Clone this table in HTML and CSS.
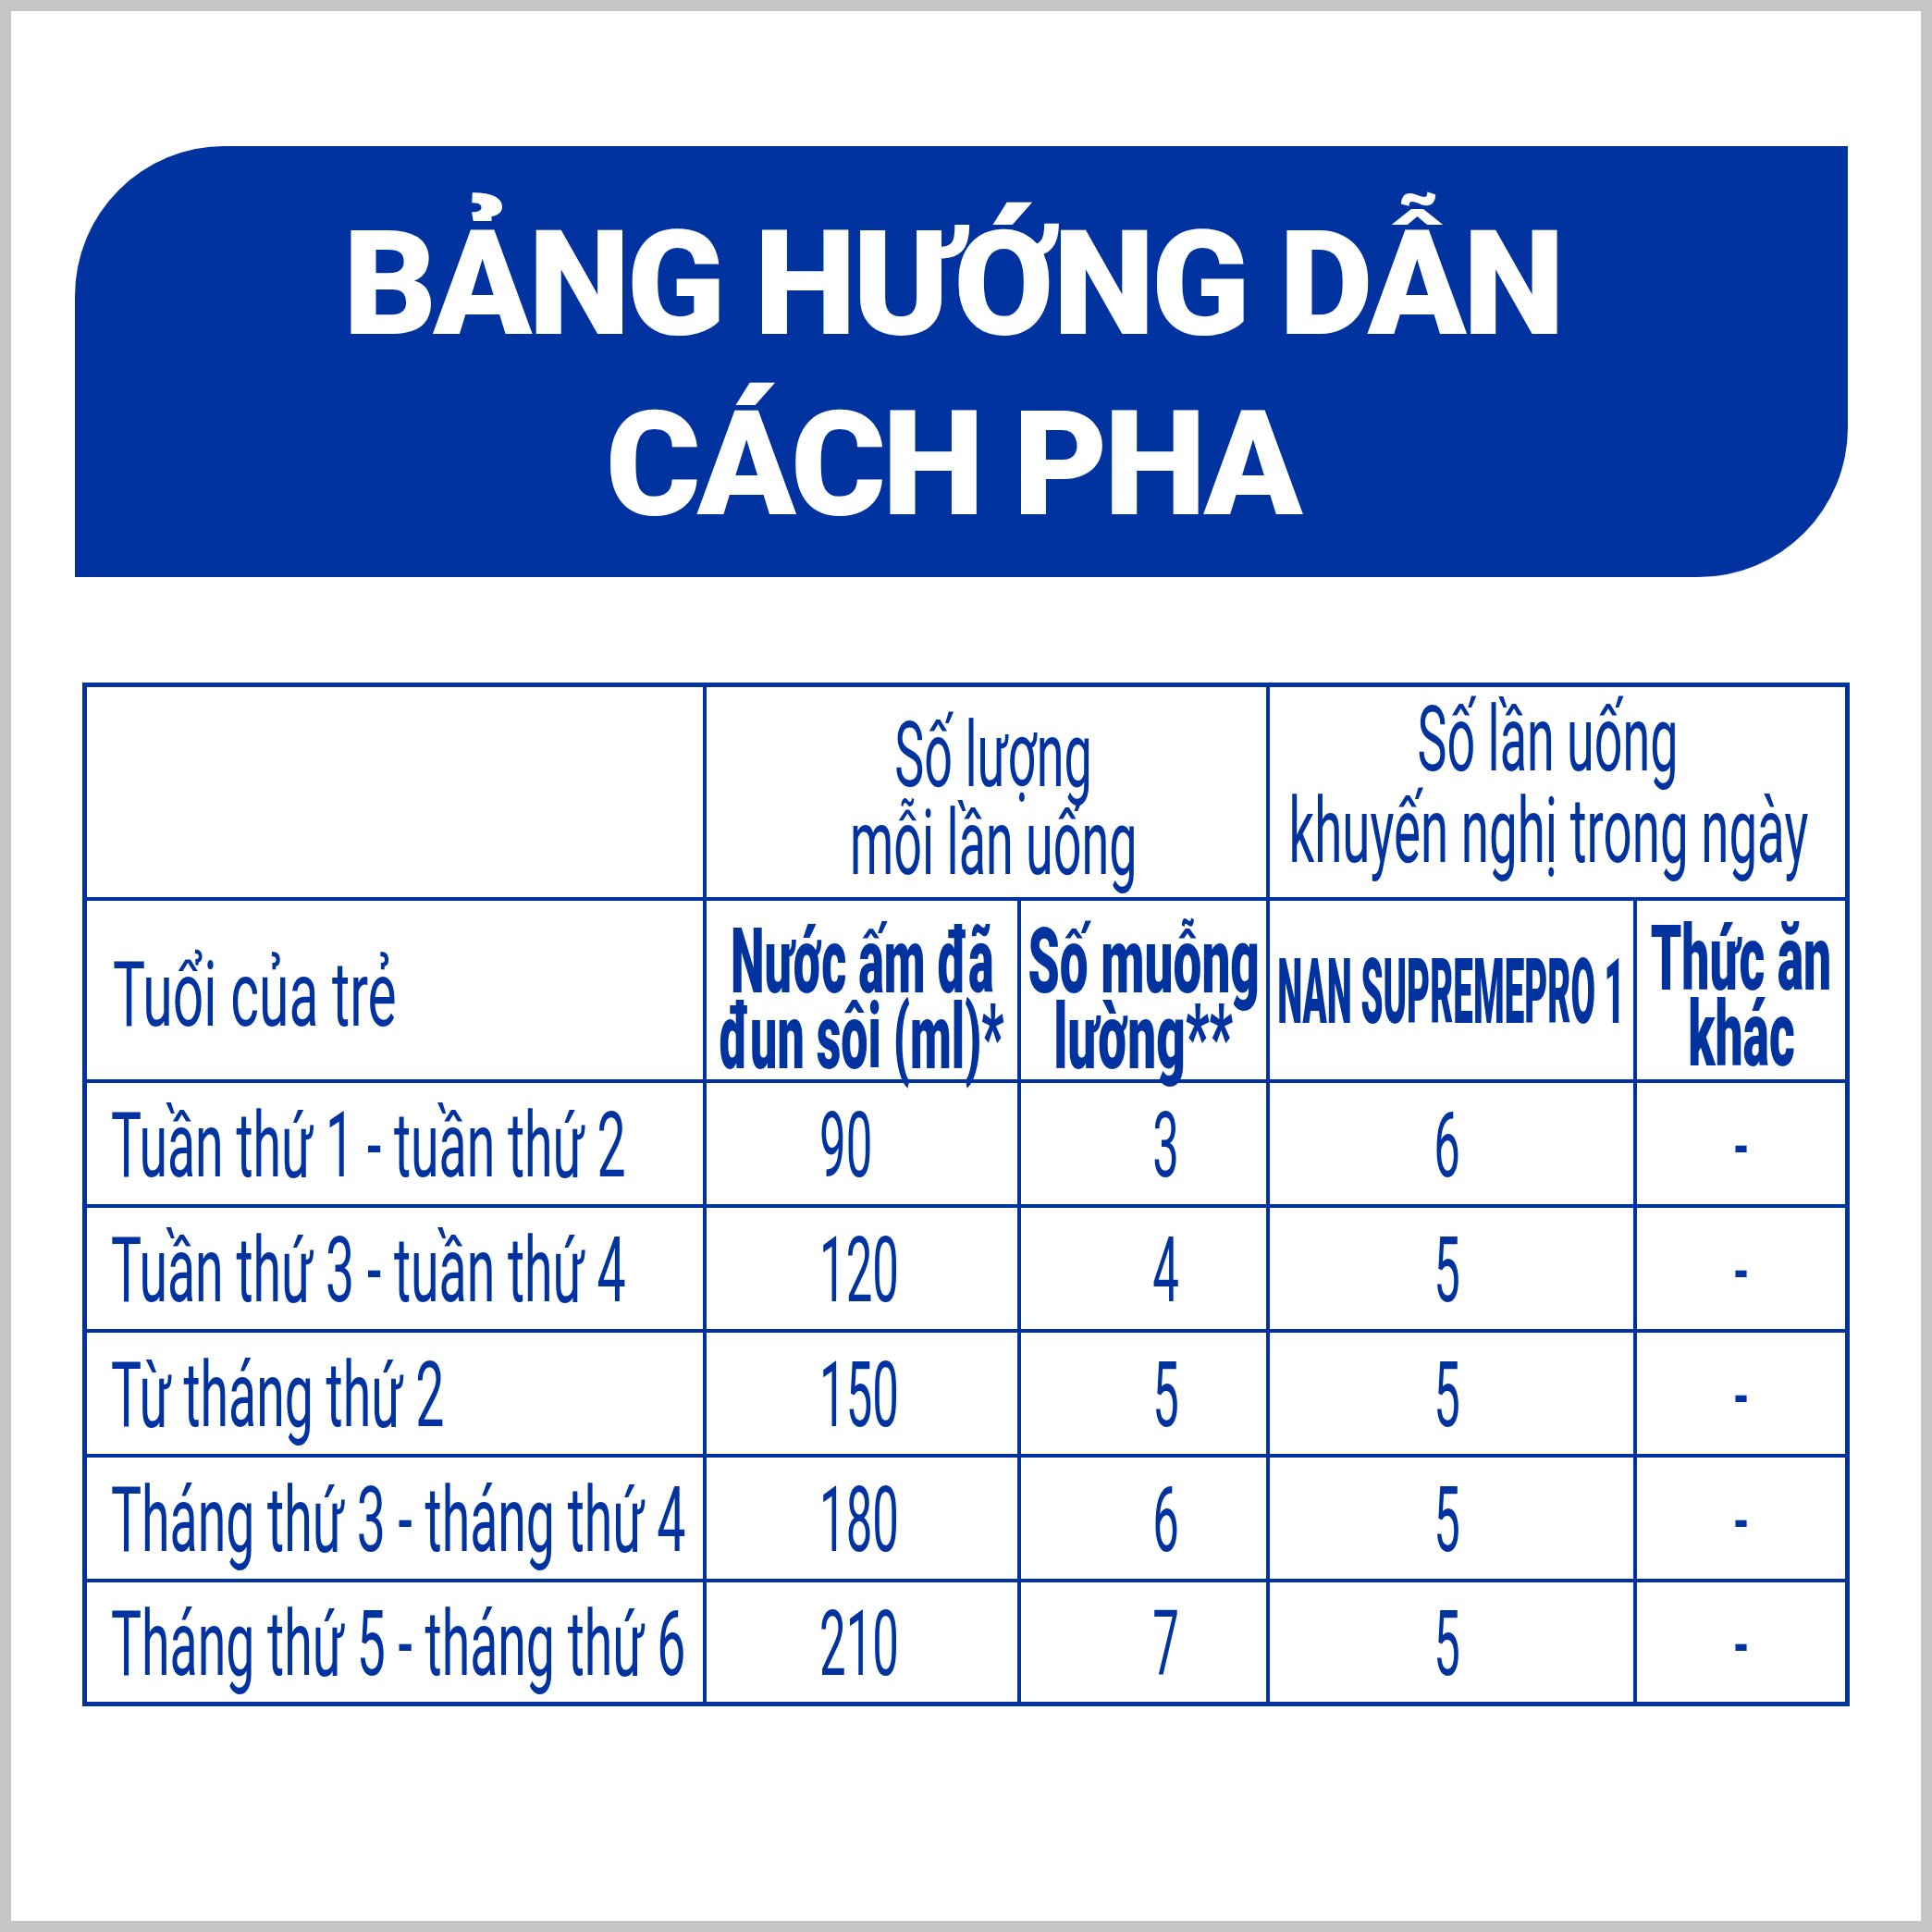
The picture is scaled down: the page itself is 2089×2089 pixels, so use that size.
FILE: index.html
```html
<!DOCTYPE html>
<html lang="vi">
<head>
<meta charset="utf-8">
<title>Bảng hướng dẫn cách pha</title>
<link rel="stylesheet" href="styles.css">
</head>
<body>
<div class="frame">
  <header class="banner">
    <h1 class="title"><span class="title-line">BẢNG HƯỚNG DẪN</span><span class="title-line">CÁCH PHA</span></h1>
  </header>

  <div class="table">
    <div class="cell"></div>
    <div class="cell span2 qty">
      <span class="t light hd">Số lượng</span>
      <span class="t light hd">mỗi lần uống</span>
    </div>
    <div class="cell span2 times">
      <span class="t light hd">Số lần uống</span>
      <span class="t light hd wide">khuyến nghị trong ngày</span>
    </div>

    <div class="cell age"><span class="t light age-text">Tuổi của trẻ</span></div>
    <div class="cell two water">
      <span class="t bold">Nước ấm đã</span>
      <span class="t bold">đun sôi (ml)*</span>
    </div>
    <div class="cell two spoon">
      <span class="t bold">Số muỗng</span>
      <span class="t bold">lường**</span>
    </div>
    <div class="cell nan"><span class="t bold nan-text">NAN SUPREMEPRO 1</span></div>
    <div class="cell two other">
      <span class="t bold">Thức ăn</span>
      <span class="t bold">khác</span>
    </div>

    <div class="cell row age-cell"><span class="t light label">Tuần thứ 1 - tuần thứ 2</span></div>
    <div class="cell row ml"><span class="t light num left">90</span></div>
    <div class="cell row spoons"><span class="t light num">3</span></div>
    <div class="cell row feeds"><span class="t light num">6</span></div>
    <div class="cell row"><span class="t light num">-</span></div>

    <div class="cell row age-cell"><span class="t light label">Tuần thứ 3 - tuần thứ 4</span></div>
    <div class="cell row ml"><span class="t light num left">120</span></div>
    <div class="cell row spoons"><span class="t light num">4</span></div>
    <div class="cell row feeds"><span class="t light num">5</span></div>
    <div class="cell row"><span class="t light num">-</span></div>

    <div class="cell row age-cell"><span class="t light label">Từ tháng thứ 2</span></div>
    <div class="cell row ml"><span class="t light num left">150</span></div>
    <div class="cell row spoons"><span class="t light num">5</span></div>
    <div class="cell row feeds"><span class="t light num">5</span></div>
    <div class="cell row"><span class="t light num">-</span></div>

    <div class="cell row age-cell"><span class="t light label">Tháng thứ 3 - tháng thứ 4</span></div>
    <div class="cell row ml"><span class="t light num left">180</span></div>
    <div class="cell row spoons"><span class="t light num">6</span></div>
    <div class="cell row feeds"><span class="t light num">5</span></div>
    <div class="cell row"><span class="t light num">-</span></div>

    <div class="cell row age-cell"><span class="t light label">Tháng thứ 5 - tháng thứ 6</span></div>
    <div class="cell row ml"><span class="t light num left">210</span></div>
    <div class="cell row spoons"><span class="t light num">7</span></div>
    <div class="cell row feeds"><span class="t light num">5</span></div>
    <div class="cell row"><span class="t light num">-</span></div>
  </div>
</div>
</body>
</html>
```

FILE: styles.css
```css
* {
  box-sizing: border-box;
  margin: 0;
  padding: 0;
}

html, body {
  width: 2089px;
  height: 2089px;
  background: #ffffff;
}

body {
  font-family: Roboto, "Liberation Sans", "Noto Sans", sans-serif;
  color: #0033a0;
  overflow: hidden;
}

.frame {
  width: 2089px;
  height: 2089px;
  border: 12px solid #c4c5c7;
  padding: 146px 0 0 69px;
}

/* ---------- banner ---------- */
.banner {
  width: 1917px;
  height: 466px;
  background: #0033a0;
  border-radius: 162px 0 162px 0;
  padding: 52px 20px 0 0;
}

.title {
  display: flex;
  flex-direction: column;
  align-items: center;
  color: #ffffff;
  font-family: Roboto, "Liberation Sans", sans-serif;
  font-weight: 900;
  font-size: 157px;
  line-height: 195px;
  letter-spacing: -4px;
  white-space: nowrap;
}

/* ---------- table ---------- */
.table {
  display: grid;
  width: fit-content;
  margin: 114px 0 0 8px;
  grid-template-columns: 666px 336px 265px 393px 225px;
  grid-template-rows: 227px 193px 131px 131px 131px 131px 129px;
  gap: 4px;
  background: #0033a0;
  border: 5px solid #0033a0;
}

.cell {
  background: #ffffff;
  display: flex;
  flex-direction: column;
  align-items: center;
  justify-content: center;
  overflow: visible;
}

.span2 {
  grid-column: span 2;
}

.t {
  display: inline-block;
  white-space: nowrap;
  font-size: 98px;
  line-height: 115px;
  transform-origin: center center;
}

.light {
  font-weight: 400;
  transform: scaleX(0.55);
}

.light.wide {
  transform: scaleX(0.558);
}

.bold {
  font-weight: 900;
  transform: scaleX(0.53);
}

.age-text {
  transform: scaleX(0.6);
  transform-origin: left center;
}

.label {
  transform: scaleX(0.565);
  transform-origin: left center;
}

.num {
  transform: scaleX(0.52);
}

.num.left {
  transform-origin: left center;
}

.nan-text {
  transform: scaleX(0.393);
}

/* header row 1 */
.qty {
  padding: 15px 0 0 16px;
}

.qty .t {
  line-height: 95px;
}

.times {
  padding: 0 20px 15px 0;
}

.times .t {
  line-height: 99px;
}

/* header row 2 */
.age {
  align-items: flex-start;
  padding: 10px 0 0 28px;
}

.two .t {
  line-height: 82px;
}

.water,
.spoon {
  padding-top: 20px;
}

.spoon .bold {
  transform: scaleX(0.56);
}

.other {
  padding-top: 14px;
}

.other .bold {
  transform: scaleX(0.545);
}

.nan {
  padding-top: 4px;
}

/* data rows */
.row {
  padding-top: 4px;
}

.age-cell {
  align-items: flex-start;
  padding-left: 26px;
}

.ml {
  align-items: flex-start;
  padding-left: 122px;
}

.spoons {
  padding-left: 48px;
}

.feeds {
  padding-right: 10px;
}
```
